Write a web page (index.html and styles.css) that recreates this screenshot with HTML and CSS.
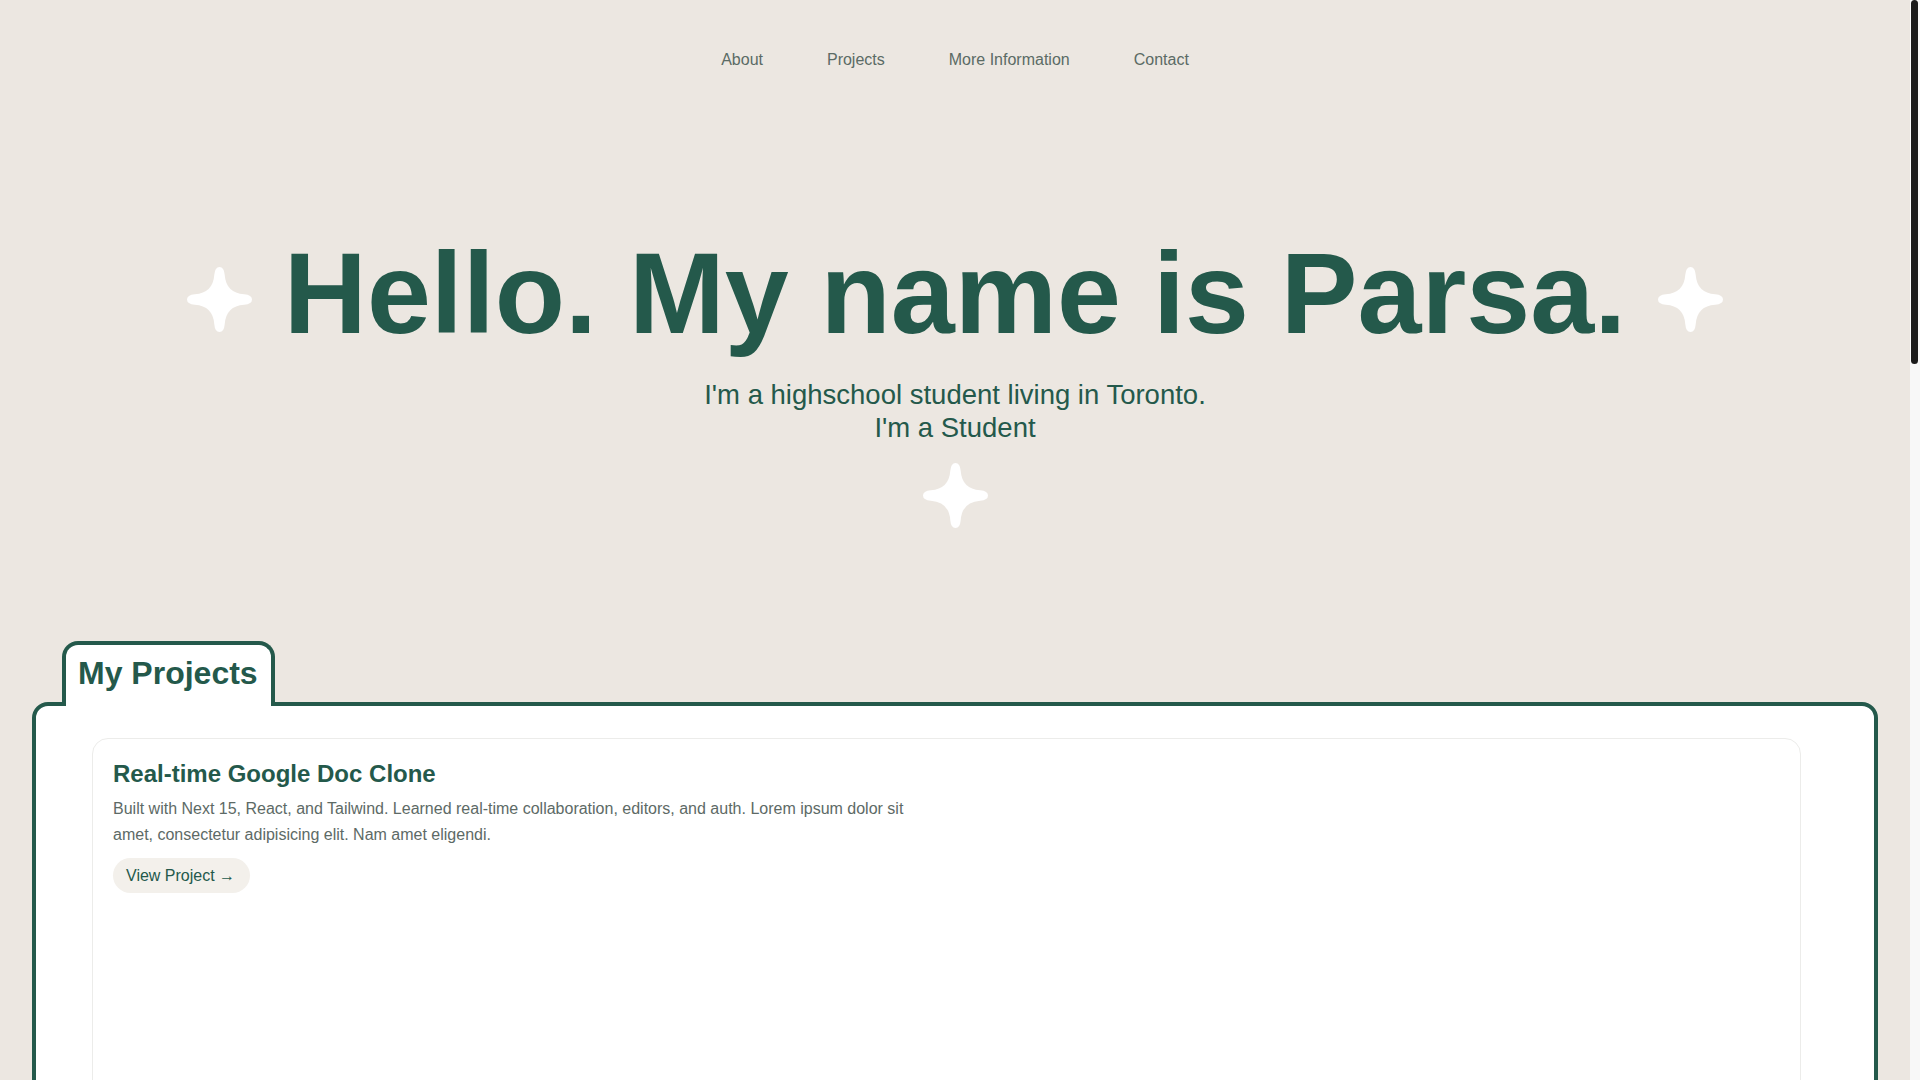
FILE: index.html
```html
<!DOCTYPE html>
<html lang="en">
<head>
    <meta charset="UTF-8">
    <title>Parsa</title>
    <link rel="stylesheet" href="styles.css">
</head>
<body>
    <nav class="nav">
        <a href="#about">About</a>
        <a href="#projects">Projects</a>
        <a href="#info">More Information</a>
        <a href="#contact">Contact</a>
    </nav>

    <header class="hero" id="about">
        <div class="hero-row">
            <svg class="star star-side" viewBox="0 0 100 100"><path d="M50 0 Q57 0 58 12 Q60 40 88 42 Q100 43 100 50 Q100 57 88 58 Q60 60 58 88 Q57 100 50 100 Q43 100 42 88 Q40 60 12 58 Q0 57 0 50 Q0 43 12 42 Q40 40 42 12 Q43 0 50 0Z"/></svg>
            <h1>Hello. My name is Parsa.</h1>
            <svg class="star star-side" viewBox="0 0 100 100"><path d="M50 0 Q57 0 58 12 Q60 40 88 42 Q100 43 100 50 Q100 57 88 58 Q60 60 58 88 Q57 100 50 100 Q43 100 42 88 Q40 60 12 58 Q0 57 0 50 Q0 43 12 42 Q40 40 42 12 Q43 0 50 0Z"/></svg>
        </div>
        <p class="hero-sub">I'm a highschool student living in Toronto.<br>I'm a Student</p>
        <svg class="star star-bottom" viewBox="0 0 100 100"><path d="M50 0 Q57 0 58 12 Q60 40 88 42 Q100 43 100 50 Q100 57 88 58 Q60 60 58 88 Q57 100 50 100 Q43 100 42 88 Q40 60 12 58 Q0 57 0 50 Q0 43 12 42 Q40 40 42 12 Q43 0 50 0Z"/></svg>
    </header>

    <section class="projects" id="projects">
        <div class="projects-tab">
            <h2>My Projects</h2>
        </div>
        <div class="projects-box">
            <article class="project-card">
                <h3>Real-time Google Doc Clone</h3>
                <p>Built with Next 15, React, and Tailwind. Learned real-time collaboration, editors, and auth. Lorem ipsum dolor sit amet, consectetur adipisicing elit. Nam amet eligendi.</p>
                <a class="project-btn" href="#">View Project &rarr;</a>
            </article>
        </div>
    </section>

    <!-- thin page scrollbar -->
    <div class="scroll-track" aria-hidden="true"><div class="scroll-thumb"></div></div>
</body>
</html>
```

FILE: styles.css
```css
body {
    margin: 0;
    padding-right: 10px;
    background-color: #ece7e1;
    font-family: "Liberation Sans", Arial, sans-serif;
    color: #24594b;
}
.scroll-track {
    position: fixed;
    top: 0;
    right: 0;
    width: 10px;
    height: 100vh;
    background-color: #f8f8f8;
}
.scroll-thumb {
    width: 7px;
    height: 364px;
    margin-left: 1px;
    background-color: #1b1b1b;
    border-radius: 4px;
}
.nav {
    display: flex;
    justify-content: center;
    gap: 64px;
    padding-top: 48px;
}
.nav a {
    color: #5b6b65;
    text-decoration: none;
    font-size: 16px;
    line-height: 24px;
}
.hero {
    display: flex;
    flex-direction: column;
    align-items: center;
    padding-top: 164px;
}
.hero-row {
    display: flex;
    align-items: center;
    gap: 32px;
}
.hero-row h1 {
    margin: 0;
    font-size: 115px;
    line-height: 1;
    font-weight: 700;
    color: #24594b;
}
.star {
    width: 65px;
    height: 65px;
    fill: #ffffff;
}
.star-side {
    margin-top: 12px;
}
.hero-sub {
    margin: 28px 0 0;
    font-size: 27.5px;
    line-height: 32.5px;
    text-align: center;
    color: #24594b;
}
.star-bottom {
    margin-top: 19px;
}
.projects {
    padding: 0 32px;
    margin-top: 113px;
}
.projects-tab {
    position: relative;
    z-index: 1;
    width: fit-content;
    margin-left: 30px;
    margin-bottom: -4px;
    padding: 10px 13px 14px 12px;
    background-color: #fff;
    border: 4px solid #24594b;
    border-bottom: none;
    border-radius: 16px 16px 0 0;
}
.projects-tab h2 {
    margin: 0;
    font-size: 32px;
    line-height: 37px;
    font-weight: 700;
}
.projects-box {
    background-color: #fff;
    border: 4px solid #24594b;
    border-radius: 16px;
    padding: 32px 73px 0 56px;
    min-height: 2450px;
}
.project-card {
    border: 1px solid #ececea;
    border-radius: 16px;
    padding: 19px 20px;
    min-height: 700px;
}
.project-card h3 {
    margin: 0 0 6px;
    font-size: 24px;
    line-height: 32px;
    font-weight: 700;
}
.project-card p {
    margin: 0;
    max-width: 800px;
    font-size: 16px;
    line-height: 26px;
    color: #5d6a66;
}
.project-btn {
    display: inline-block;
    margin-top: 10px;
    padding: 6px 15px 6px 13px;
    background-color: #f3f0eb;
    border-radius: 999px;
    color: #24594b;
    text-decoration: none;
    font-size: 16px;
    line-height: 23px;
}
```
